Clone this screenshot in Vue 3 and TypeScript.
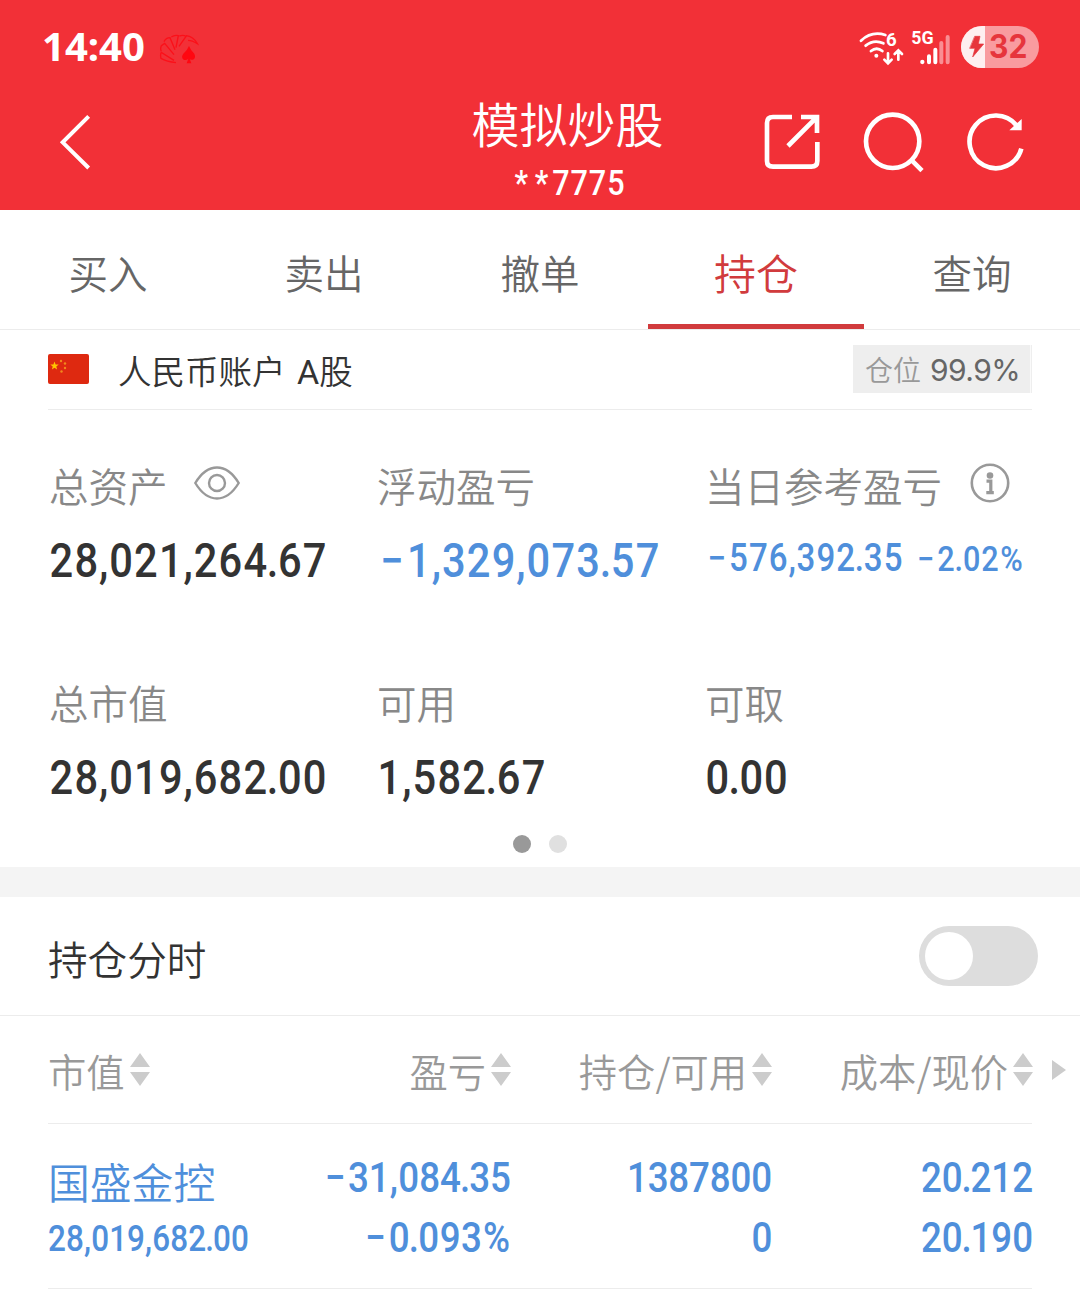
<script setup lang="ts">
import { defineComponent, h } from 'vue'

// Relative cell widths of the condensed numeric face, in cap heights.
const CELL: Record<string, number> = { '.': 0.27, ',': 0.28, '−': 0.83, '%': 0.94, '*': 0.78 }

// A figure set on its baseline, spread evenly over a known width.
const Num = defineComponent({
  props: {
    text: { type: String, required: true },
    cap: { type: Number, required: true },
    w: { type: Number, required: true },
  },
  setup(props) {
    const squeeze = 0.87
    return () => {
      const chars = [...props.text]
      const cells = chars.map((c) => CELL[c] ?? 0.7)
      const unit = props.w / cells.reduce((a, b) => a + b, 0)
      let at = 0
      const xs = cells.map((c) => {
        const mid = (at + c / 2) * unit
        at += c
        return (mid / squeeze).toFixed(2)
      })
      const size = props.cap / 0.711
      return h(
        'svg',
        { width: props.w, height: props.cap, style: { display: 'block', overflow: 'visible', flex: 'none' } },
        [
          h(
            'text',
            {
              x: xs.join(' '),
              y: props.cap,
              transform: `scale(${squeeze} 1)`,
              'text-anchor': 'middle',
              'font-family': 'Roboto, sans-serif',
              'font-weight': 500,
              'font-size': size,
              fill: 'currentColor',
            },
            props.text,
          ),
        ],
      )
    }
  },
})

const tabs = ['买入', '卖出', '撤单', '持仓', '查询']
const active = '持仓'
const headers = ['市值', '盈亏', '持仓/可用', '成本/现价']
</script>

<template>
  <div class="screen">
    <header class="top">
      <div class="status">
        <svg class="clock" width="104" height="28" viewBox="0 0 104 28">
          <text x="0" y="27.5" textLength="103" lengthAdjust="spacingAndGlyphs">14:40</text>
        </svg>
        <svg class="fan" width="40" height="32" viewBox="477 98 120 96" fill="none" stroke="#fb1019" stroke-width="4">
          <path d="M528 187Q500 184 483 174Q480 163 484 156L522 180M484 153Q480 146 484 136L494 129L522 163M492 124Q498 112 510 112L525 148M514 110Q524 103 535 106L528 142M538 107Q550 103 558 108L537 138M558 106Q580 108 592 130Q576 120 564 120" />
          <path d="M567 137Q572 150 583 160Q589 172 579 178Q573 180 569 175L574 189H560L565 175Q559 181 551 178Q542 170 550 160Q562 150 567 137Z" fill="#ff0710" stroke="none" />
        </svg>
        <svg class="signals" width="184" height="48" viewBox="354 72 552 144" fill="none" stroke="#fff" stroke-linecap="round">
          <g stroke-width="8.5">
            <path d="M363 122Q395 92 436 105M377 137Q402 117 430 130M393 153Q410 139 427 153" />
            <path d="M444 160V188M433 179L444 190L455 179M475 179V153M464 162L475 151L486 162" stroke-width="8" />
          </g>
          <circle cx="409" cy="167" r="6" fill="#fff" stroke="none" />
          <text x="438" y="138" font-size="56" class="net">6</text>
          <text x="514" y="133" font-size="53" class="net" textLength="67" lengthAdjust="spacingAndGlyphs">5G</text>
          <circle cx="547" cy="186" r="6.5" fill="#fff" stroke="none" />
          <path d="M567 169V187M586 149V187" stroke-width="12" />
          <path d="M604 129V187M623 111V187" stroke-width="12" stroke="#f98e93" />
          <rect x="663" y="78" width="234" height="126" rx="63" fill="#f99b9f" stroke="none" />
          <path d="M735 78H726A63 63 0 0 0 726 204H735Z" fill="#feeff0" stroke="none" />
          <path d="M705 109H720L715 132H731L698 171L705 145H690Z" fill="#e6353c" stroke="#e6353c" stroke-width="2" />
          <text x="747" y="173" font-size="97" class="battery" textLength="115" lengthAdjust="spacingAndGlyphs">32</text>
        </svg>
      </div>
      <nav class="nav">
        <svg class="back" width="34" height="60" viewBox="174 336 102 180" fill="none" stroke="#fff" stroke-width="12">
          <path d="M266 349L188 427L266 504" />
        </svg>
        <div class="title">
          <h1>模拟炒股</h1>
          <Num text="**7775" :cap="25" :w="114" />
        </div>
        <div class="actions">
          <svg width="60" height="60" viewBox="66 336 180 180" fill="none" stroke="#fff" stroke-width="14">
            <path d="M156 351H99Q81 351 81 369V483Q81 500 99 500H214Q232 500 232 483V426M183 351H231V399M144 438L229 353" />
          </svg>
          <svg width="65" height="65" viewBox="363 327 195 195" fill="none" stroke="#fff" stroke-width="14">
            <circle cx="458" cy="421" r="80" /><path d="M513 476L546 509" />
          </svg>
          <svg width="62" height="64" viewBox="675 330 186 192" fill="none" stroke="#fff" stroke-width="14">
            <path d="M844 446A79 79 0 1 1 830 377" /><path d="M845 357V391H808Z" fill="#fff" stroke="none" />
          </svg>
        </div>
      </nav>
    </header>

    <div class="tabs">
      <div v-for="t in tabs" :key="t" class="tab" :class="{ on: t === active }">{{ t }}</div>
    </div>

    <section class="account">
      <svg class="flag" width="41" height="30" viewBox="0 0 41 30">
        <rect width="41" height="30" rx="2" fill="#de2910" />
        <path d="M6.5 7.5L7.6 10.4L10.7 10.5L8.3 12.4L9.1 15.4L6.5 13.7L3.9 15.4L4.7 12.4L2.3 10.5L5.4 10.4Z" fill="#ffc400" />
        <g fill="#f18a1c"><circle cx="13" cy="7" r="1.2" /><circle cx="17" cy="9.5" r="1.2" /><circle cx="17" cy="14" r="1.2" /><circle cx="13.5" cy="17.5" r="1.2" /></g>
      </svg>
      <span class="name">人民币账户 <i>A</i>股</span>
      <span class="badge">仓位<b>99.9%</b></span>
    </section>

    <section class="metrics">
      <div class="metric">
        <div class="label"><span>总资产</span>
          <svg class="eye" width="48" height="36" viewBox="0 0 48 36" fill="none" stroke="#999" stroke-width="2.4">
            <path d="M2.3 18C9 7 17 2.5 24 2.5S39 7 45.7 18C39 29 31 33.5 24 33.5S9 29 2.3 18Z" /><circle cx="24" cy="18" r="8" />
          </svg>
        </div>
        <Num text="28,021,264.67" :cap="34" :w="278" />
      </div>
      <div class="metric">
        <div class="label"><span>浮动盈亏</span></div>
        <Num class="blue" text="−1,329,073.57" :cap="34" :w="283" />
      </div>
      <div class="metric">
        <div class="label"><span>当日参考盈亏</span>
          <svg class="info" width="40" height="40" viewBox="0 0 40 40" fill="none" stroke="#999" stroke-width="2.6">
            <circle cx="20" cy="20" r="18.2" /><circle cx="20" cy="12.5" r="3.3" fill="#999" stroke="none" />
            <path d="M16.5 18.2H20.8V29M16.3 29.6H23.8" stroke-width="3.2" />
          </svg>
        </div>
        <div class="pair blue">
          <Num text="−576,392.35" :cap="27" :w="198" />
          <Num text="−2.02%" :cap="25" :w="109" />
        </div>
      </div>
      <div class="metric">
        <div class="label"><span>总市值</span></div>
        <Num text="28,019,682.00" :cap="34" :w="278" />
      </div>
      <div class="metric">
        <div class="label"><span>可用</span></div>
        <Num text="1,582.67" :cap="34" :w="169" />
      </div>
      <div class="metric">
        <div class="label"><span>可取</span></div>
        <Num text="0.00" :cap="34" :w="83" />
      </div>
    </section>
    <div class="dots"><span class="cur"></span><span></span></div>

    <section class="intraday">
      <span class="caption">持仓分时</span>
      <span class="toggle"></span>
    </section>

    <section class="table">
      <div class="cols head">
        <div v-for="t in headers" :key="t" class="th">
          <span>{{ t }}</span>
          <svg width="20" height="34" viewBox="0 0 20 34" fill="#ccc"><path d="M10 0L20 14H0ZM10 33L0 19H20Z" /></svg>
        </div>
        <svg class="more" width="14" height="20" viewBox="0 0 14 20" fill="#ccc"><path d="M0 0L14 10L0 20Z" /></svg>
      </div>
      <div class="line"></div>
      <div class="cols row blue">
        <div class="stock">
          <span>国盛金控</span>
          <Num text="28,019,682.00" :cap="25.7" :w="201" />
        </div>
        <div class="td">
          <Num text="−31,084.35" :cap="30" :w="188" />
          <Num text="−0.093%" :cap="30" :w="148" />
        </div>
        <div class="td">
          <Num text="1387800" :cap="30" :w="145" />
          <Num text="0" :cap="30" :w="20" />
        </div>
        <div class="td">
          <Num text="20.212" :cap="30" :w="112" />
          <Num text="20.190" :cap="30" :w="112" />
        </div>
      </div>
      <div class="line"></div>
    </section>
  </div>
</template>

<style>
body { margin: 0; background: #fff; }
</style>

<style scoped>
.screen {
  width: 1080px;
  height: 1296px;
  overflow: hidden;
  background: #fff;
  color: #333;
  font-family: "Noto Sans CJK SC", sans-serif;
  font-weight: 350;
  box-sizing: border-box;
}
svg { display: block; flex: none; }
.blue { color: #4f8fdb; }
.top { height: 210px; background: #f23037; color: #fff; }
.status { height: 96px; display: flex; align-items: flex-start; padding: 0 38px 0 42px; }
.clock { margin-top: 33px; overflow: visible; }
.clock text { font: 700 38.5px "Noto Sans", sans-serif; fill: #fff; }
.fan { margin: 33px 0 0 13px; }
.signals { margin: 24px 0 0 auto; }
.net { font-family: Roboto, sans-serif; font-weight: 700; fill: #fff; stroke: none; }
.battery { font-family: Inter, sans-serif; font-weight: 700; fill: #e6353c; stroke: none; }
.nav { height: 114px; display: grid; grid-template-columns: 440px 255px 1fr; }
.back { margin: 16px 0 0 58px; }
.title { display: flex; flex-direction: column; align-items: center; }
h1 { margin: 0 0 21px; font-size: 48px; font-weight: inherit; line-height: 53px; height: 53px; }
.actions { height: 92px; display: flex; justify-content: flex-end; align-items: center; gap: 39px; padding-right: 53px; }
.tabs { display: flex; height: 119px; border-bottom: 1px solid #ececec; }
.tab { flex: 1; box-sizing: border-box; text-align: center; font-size: 39.5px; line-height: 123px; color: #666; height: 119px; }
.tab.on { font-size: 42px; color: #d13b3d; border-bottom: 5px solid #d13b3d; }
.account { margin: 0 48px; height: 79px; border-bottom: 1px solid #ececec; display: flex; align-items: center; }
.flag { margin-bottom: 2px; }
.name { margin-left: 29px; padding-top: 1px; font-size: 33.5px; line-height: 50px; white-space: pre; }
.name i { font: 400 34px Roboto, sans-serif; margin-left: 4px; }
.badge { margin: 0 0 1px auto; width: 179px; height: 48px; box-sizing: border-box; background: #eee; box-shadow: inset -1px 0 #eee, inset -2px 0 #fafafa; color: #999; font-size: 28px; line-height: 49px; display: flex; justify-content: space-between; padding: 0 12px; overflow: hidden; }
.badge b { font: 400 30px/51px Inter, sans-serif; letter-spacing: -0.6px; color: #666; }
.metrics { display: grid; grid-template-columns: 328px 328px 1fr; grid-auto-rows: 217px; padding: 46px 0 0 49px; height: 378px; }
.label { height: 54px; line-height: 54px; margin-bottom: 33px; font-size: 39.5px; color: #888; display: flex; align-items: center; white-space: nowrap; }
.label span { padding-top: 4px; }
.eye { margin: 0 0 0 25px; }
.info { margin: 0 0 0 28px; }
.pair { display: flex; align-items: flex-end; gap: 12px; padding-top: 1px; }
.dots { height: 33px; display: flex; justify-content: center; gap: 18px; border-bottom: 30px solid #f4f4f4; }
.dots span { width: 18px; height: 18px; border-radius: 50%; background: #e0e0e0; margin-top: 1px; }
.dots .cur { background: #999; }
.intraday { height: 118px; border-bottom: 1px solid #ececec; display: flex; align-items: center; justify-content: space-between; padding: 0 42px 0 48px; font-size: 39.6px; }
.caption { line-height: 60px; padding-top: 4px; }
.toggle { width: 107px; height: 48px; padding: 6px; border-radius: 30px; background: #ddd; }
.toggle::before { content: ""; display: block; width: 48px; height: 48px; border-radius: 50%; background: #fff; }
.cols { display: grid; grid-template-columns: 180px 283px 261px 261px 1fr; padding-left: 48px; }
.head { height: 107px; align-items: center; color: #999; font-size: 38.3px; }
.th { display: flex; align-items: center; justify-content: flex-end; gap: 5px; }
.th:first-child { justify-content: flex-start; }
.th span { line-height: 56px; padding-top: 3px; white-space: nowrap; }
.more { margin-left: 19px; }
.line { height: 1px; margin: 0 48px; background: #ececec; }
.row { height: 164px; }
.stock span { display: block; font-size: 41.8px; line-height: 60px; margin: 27px 0 13.5px; white-space: nowrap; }
.td { display: flex; flex-direction: column; align-items: flex-end; gap: 30px; padding-top: 38px; }
</style>
